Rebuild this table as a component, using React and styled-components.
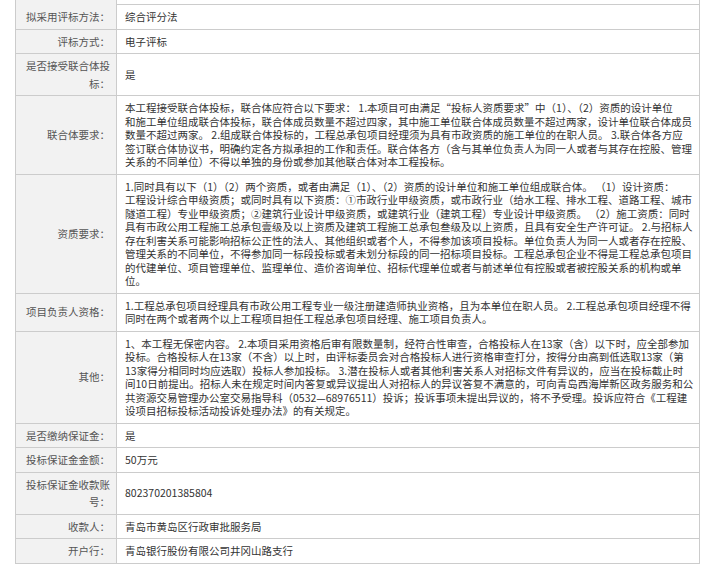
import React from 'react';
import styled, { createGlobalStyle } from 'styled-components';

const Global = createGlobalStyle`
  html, body {
    margin: 0;
    padding: 0;
    background: #fff;
  }
  body {
    font-family: "Noto Sans CJK SC", "Microsoft YaHei", sans-serif;
  }
`;

const Page = styled.div`
  padding-left: 15px;
  width: 713px;
  box-sizing: border-box;
`;

const Table = styled.div`
  width: 685px;
  box-sizing: border-box;
  border-left: 1px solid #ccc;
  border-right: 1px solid #ccc;
  border-bottom: 1px solid #ccc;
`;

const Row = styled.div`
  display: grid;
  grid-template-columns: 101px 1fr;
  border-top: ${p => (p.$first ? 'none' : '1px solid #ccc')};
  height: ${p => (p.$cut ? '4px' : 'auto')};
`;

const Label = styled.div`
  background: #f2f2f2;
  border-right: 1px solid #ccc;
  color: #555;
  font-size: 10.5px;
  line-height: 17.5px;
  padding: 3px 6px;
  text-align: right;
  display: flex;
  align-items: center;
  justify-content: flex-end;
`;

const Value = styled.div`
  color: #333;
  font-size: 10.5px;
  line-height: 13.5px;
  padding: 5px 8px;
  display: flex;
  flex-direction: column;
  justify-content: center;
`;

const Line = styled.span`
  display: block;
  white-space: nowrap;
`;

const rows = [
  { label: '拟采用评标方法：', lines: ['综合评分法'] },
  { label: '评标方式：', lines: ['电子评标'] },
  { label: '是否接受联合体投标：', lines: ['是'] },
  {
    label: '联合体要求：',
    lines: [
      '本工程接受联合体投标，联合体应符合以下要求： 1.本项目可由满足“投标人资质要求”中（1）、（2）资质的设计单位',
      '和施工单位组成联合体投标，联合体成员数量不超过四家，其中施工单位联合体成员数量不超过两家，设计单位联合体成员',
      '数量不超过两家。 2.组成联合体投标的，工程总承包项目经理须为具有市政资质的施工单位的在职人员。 3.联合体各方应',
      '签订联合体协议书，明确约定各方拟承担的工作和责任。联合体各方（含与其单位负责人为同一人或者与其存在控股、管理',
      '关系的不同单位）不得以单独的身份或参加其他联合体对本工程投标。',
    ],
  },
  {
    label: '资质要求：',
    lines: [
      '1.同时具有以下（1）（2）两个资质，或者由满足（1）、（2）资质的设计单位和施工单位组成联合体。 （1）设计资质：',
      '工程设计综合甲级资质；或同时具有以下资质：①市政行业甲级资质，或市政行业（给水工程、排水工程、道路工程、城市',
      '隧道工程）专业甲级资质；②建筑行业设计甲级资质，或建筑行业（建筑工程）专业设计甲级资质。 （2）施工资质：同时',
      '具有市政公用工程施工总承包壹级及以上资质及建筑工程施工总承包叁级及以上资质，且具有安全生产许可证。 2.与招标人',
      '存在利害关系可能影响招标公正性的法人、其他组织或者个人，不得参加该项目投标。单位负责人为同一人或者存在控股、',
      '管理关系的不同单位，不得参加同一标段投标或者未划分标段的同一招标项目投标。工程总承包企业不得是工程总承包项目',
      '的代建单位、项目管理单位、监理单位、造价咨询单位、招标代理单位或者与前述单位有控股或者被控股关系的机构或单',
      '位。',
    ],
  },
  {
    label: '项目负责人资格：',
    lines: [
      '1.工程总承包项目经理具有市政公用工程专业一级注册建造师执业资格，且为本单位在职人员。 2.工程总承包项目经理不得',
      '同时在两个或者两个以上工程项目担任工程总承包项目经理、施工项目负责人。',
    ],
  },
  {
    label: '其他：',
    lines: [
      '1、本工程无保密内容。 2.本项目采用资格后审有限数量制，经符合性审查，合格投标人在13家（含）以下时，应全部参加',
      '投标。合格投标人在13家（不含）以上时，由评标委员会对合格投标人进行资格审查打分，按得分由高到低选取13家（第',
      '13家得分相同时均应选取）投标人参加投标。 3.潜在投标人或者其他利害关系人对招标文件有异议的，应当在投标截止时',
      '间10日前提出。招标人未在规定时间内答复或异议提出人对招标人的异议答复不满意的，可向青岛西海岸新区政务服务和公',
      '共资源交易管理办公室交易指导科（0532—68976511）投诉；投诉事项未提出异议的，将不予受理。投诉应符合《工程建',
      '设项目招标投标活动投诉处理办法》的有关规定。',
    ],
  },
  { label: '是否缴纳保证金：', lines: ['是'] },
  { label: '投标保证金金额：', lines: ['50万元'] },
  { label: '投标保证金收款账号：', lines: ['802370201385804'] },
  { label: '收款人：', lines: ['青岛市黄岛区行政审批服务局'] },
  { label: '开户行：', lines: ['青岛银行股份有限公司井冈山路支行'] },
];

const App = () => (
  <Page>
    <Global />
    <Table>
      <Row $first $cut>
        <Label />
        <div />
      </Row>
      {rows.map(r => (
        <Row key={r.label}>
          <Label>{r.label}</Label>
          <Value>
            {r.lines.map((l, i) => (
              <Line key={i}>{l}</Line>
            ))}
          </Value>
        </Row>
      ))}
    </Table>
  </Page>
);

export default App;
